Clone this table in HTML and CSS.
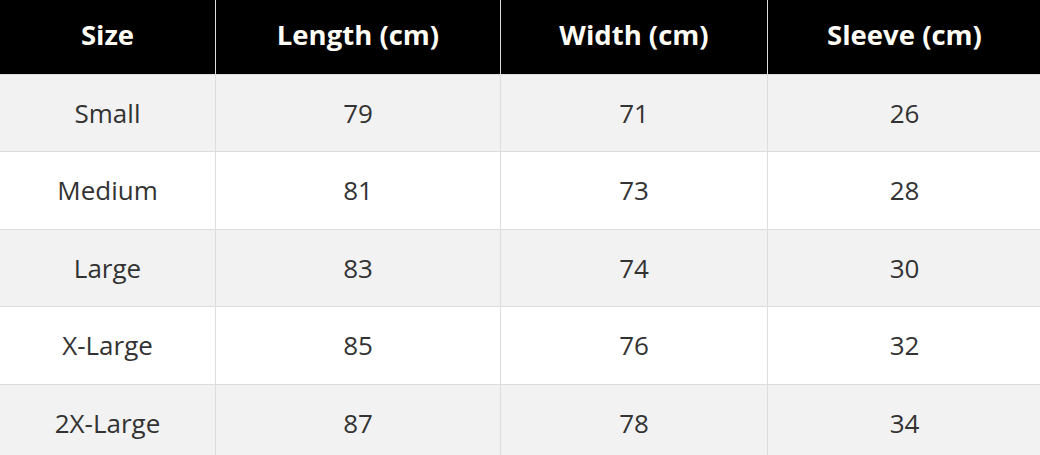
FILE: index.html
```html
<!DOCTYPE html>
<html>
<head>
<meta charset="utf-8">
<link rel="stylesheet" href="styles.css">
</head>
<body>
<table class="size-table">
  <colgroup>
    <col class="c1"><col class="c2"><col class="c3"><col class="c4">
  </colgroup>
  <thead>
    <tr><th>Size</th><th>Length (cm)</th><th>Width (cm)</th><th>Sleeve (cm)</th></tr>
  </thead>
  <tbody>
    <tr><td>Small</td><td>79</td><td>71</td><td>26</td></tr>
    <tr><td>Medium</td><td>81</td><td>73</td><td>28</td></tr>
    <tr><td>Large</td><td>83</td><td>74</td><td>30</td></tr>
    <tr><td>X-Large</td><td>85</td><td>76</td><td>32</td></tr>
    <tr><td>2X-Large</td><td>87</td><td>78</td><td>34</td></tr>
  </tbody>
</table>
</body>
</html>
```
FILE: styles.css
```css
html, body {
  margin: 0;
  padding: 0;
  background: #fff;
}
.size-table {
  width: 1042px;
  margin-left: -1px;
  border-collapse: collapse;
  table-layout: fixed;
  font-family: "Open Sans", "DejaVu Sans", sans-serif;
  font-size: 26px;
}
.c1 { width: 216px; }
.c2 { width: 285px; }
.c3 { width: 267px; }
.c4 { width: 274px; }
.size-table th {
  background: #000;
  color: #fffdf5;
  font-weight: 700;
  font-size: 27.5px;
  height: 74px;
  padding: 0 0 5px;
  box-sizing: border-box;
  text-align: center;
  border: 1px solid #ddd;
  border-top: none;
}
.size-table td {
  height: 76.5px;
  padding: 0;
  text-align: center;
  color: #333;
  border: 1px solid #ddd;
}
.size-table tbody tr:nth-child(odd) td {
  background: #f2f2f2;
}
.size-table tbody tr:nth-child(even) td {
  background: #fff;
}
```
